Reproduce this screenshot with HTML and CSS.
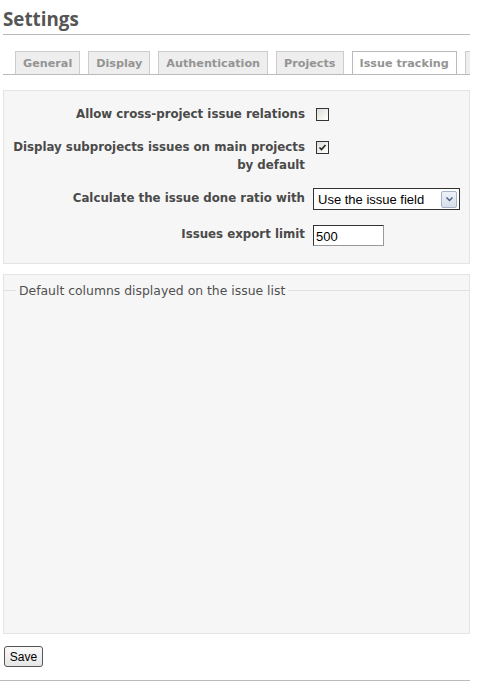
FILE: index.html
```html
<!DOCTYPE html>
<html lang="en">
<head>
  <meta charset="UTF-8">
  <title>Settings</title>
  <link rel="stylesheet" href="styles.css">
</head>
<body>
  <div class="content">
    <h2>Settings</h2>

    <div class="tabs">
      <ul>
        <li><a href="#">General</a></li>
        <li><a href="#">Display</a></li>
        <li><a href="#">Authentication</a></li>
        <li><a href="#">Projects</a></li>
        <li><a href="#" class="selected">Issue tracking</a></li>
        <li><a href="#" class="more"></a></li>
      </ul>
    </div>

    <div class="box tabular">
      <div class="row">
        <label>Allow cross-project issue relations</label>
        <span class="check"></span>
      </div>
      <div class="row">
        <label>Display subprojects issues on main projects by default</label>
        <span class="check">
          <svg width="9" height="9" viewBox="0 0 9 9"><path d="M1.5 4.5 L3.5 6.5 L7.5 2" fill="none" stroke="#222" stroke-width="1.6"/></svg>
        </span>
      </div>
      <div class="row">
        <label>Calculate the issue done ratio with</label>
        <div class="select">
          <span>Use the issue field</span>
          <span class="arrow">
            <svg width="9" height="7" viewBox="0 0 9 7"><path d="M1.5 1.5 L4.5 4.5 L7.5 1.5" fill="none" stroke="#4d6185" stroke-width="1.5"/></svg>
          </span>
        </div>
      </div>
      <div class="row">
        <label>Issues export limit</label>
        <input type="text" value="500">
      </div>
    </div>

    <div class="box columns">
      <fieldset>
        <legend>Default columns displayed on the issue list</legend>
      </fieldset>
    </div>

    <button>Save</button>
  </div>
  <hr>
</body>
</html>
```

FILE: styles.css
```css
body {
  margin: 0;
  padding: 0;
  background: #fff;
  color: #505050;
  font-family: "DejaVu Sans", Verdana, sans-serif;
  font-size: 11px;
}
.content {
  width: 467px;
  margin-left: 3px;
}
h2 {
  margin: 0;
  padding: 9px 0 4px 0;
  font-family: "Open Sans", "DejaVu Sans", sans-serif;
  font-size: 18.8px;
  font-weight: bold;
  line-height: 21px;
  color: #555;
  border-bottom: 1px solid #bbb;
}
.tabs {
  margin-top: 16px;
  overflow: hidden;
  border-bottom: 1px solid #bbb;
  height: 23px;
}
.tabs ul {
  list-style: none;
  margin: 0;
  padding: 0 0 0 12px;
  display: flex;
  gap: 8px;
  white-space: nowrap;
}
.tabs a {
  display: block;
  height: 23px;
  line-height: 24px;
  padding: 0 7px;
  background: #eee;
  border: 1px solid #ccc;
  border-bottom: none;
  color: #949494;
  font-size: 11.2px;
  font-weight: bold;
  text-decoration: none;
  box-sizing: border-box;
}
.tabs a.selected {
  background: #fff;
  border-color: #bbb;
  height: 24px;
}
.tabs a.more {
  width: 40px;
}
.box {
  background: #f6f6f6;
  border: 1px solid #e4e4e4;
}
.tabular {
  margin-top: 15px;
  padding: 7px 0 9px 0;
}
.row {
  display: grid;
  grid-template-columns: 301px 1fr;
  gap: 8px;
  padding: 7px 0 8px 0;
  align-items: start;
}
.row label {
  text-align: right;
  font-size: 11.8px;
  font-weight: bold;
  line-height: 18px;
  color: #4a4a4a;
}
.check {
  display: flex;
  align-items: center;
  justify-content: center;
  width: 13px;
  height: 13px;
  margin: 3px 0 0 3px;
  box-sizing: border-box;
  border: 1px solid #333;
  background: linear-gradient(135deg, #dcdcd6, #fff);
}
.select {
  display: flex;
  align-items: center;
  justify-content: space-between;
  width: 147px;
  height: 22px;
  margin-top: -1px;
  box-sizing: border-box;
  border: 1px solid #333;
  background: #fff;
  padding: 0 2px 0 4px;
  font-family: "Liberation Sans", Arial, sans-serif;
  font-size: 13px;
  color: #000;
}
.select .arrow {
  display: flex;
  align-items: center;
  justify-content: center;
  width: 16px;
  height: 17px;
  box-sizing: border-box;
  border: 1px solid #a4b3c8;
  border-radius: 2px;
  background: linear-gradient(#eef2f8, #d6deea);
}
input[type="text"] {
  width: 71px;
  height: 21px;
  box-sizing: border-box;
  margin: 0;
  padding: 2px 2px 0 2px;
  border: 1px solid #333;
  border-right-color: #999;
  border-bottom-color: #999;
  font-family: "Liberation Sans", Arial, sans-serif;
  font-size: 13px;
  color: #000;
}
.columns {
  margin-top: 10px;
  height: 358px;
  padding: 0;
}
fieldset {
  margin: 0;
  padding: 0;
  border: none;
  border-top: 1px solid #e0e0e0;
  margin-top: 8px;
}
legend {
  margin-left: 12px;
  padding: 0 3px;
  font-size: 12.4px;
  color: #505050;
}
button {
  margin: 12px 0 0 1px;
  width: 39px;
  height: 21px;
  padding: 0;
  border: 1px solid #555;
  border-radius: 3px;
  background: linear-gradient(#fafafa, #e6e6e6);
  font-family: "Liberation Sans", Arial, sans-serif;
  font-size: 12px;
  color: #000;
}
hr {
  width: 470px;
  margin: 13px 0 0 0;
  border: none;
  border-top: 1px solid #bbb;
}
```
